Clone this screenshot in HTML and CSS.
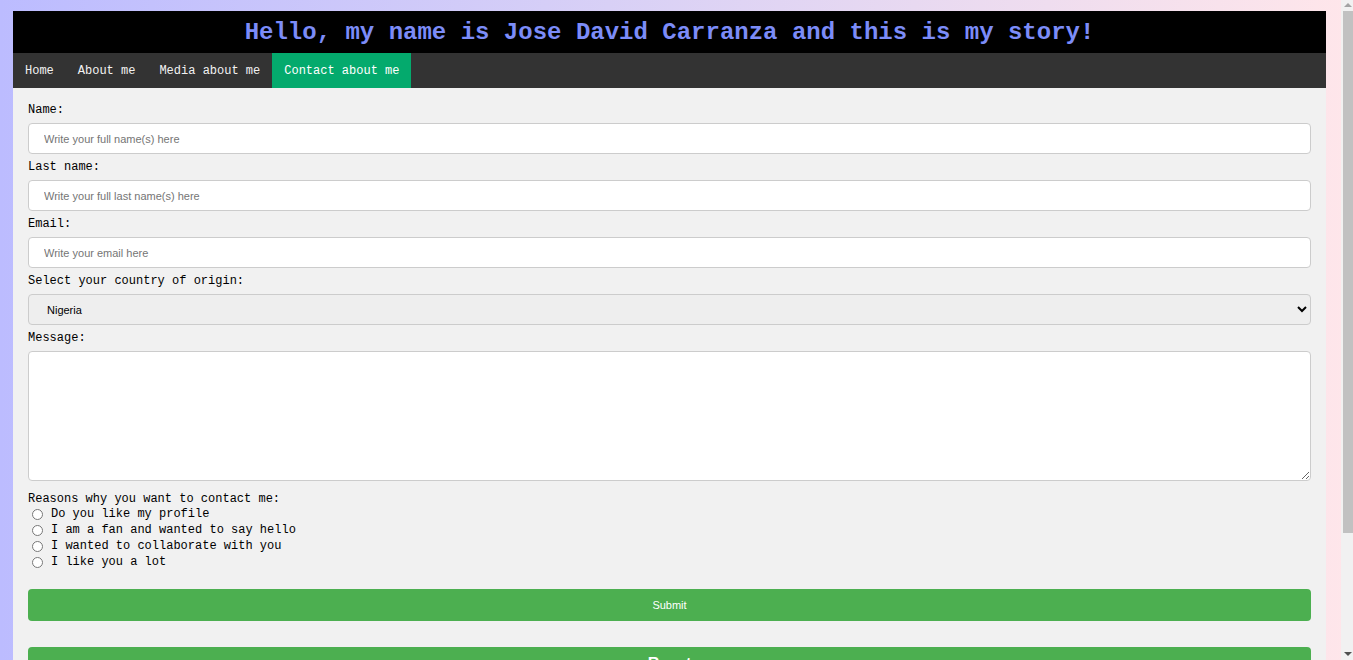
FILE: index.html
```html
<!DOCTYPE html>
<html lang="en">
<head>
<meta charset="utf-8">
<title>Contact about me</title>
<link rel="stylesheet" href="styles.css">
</head>
<body>
<div class="page">
  <header class="header">
    <h1 class="title">Hello, my name is Jose David Carranza and this is my story!</h1>
  </header>
  <nav class="nav">
    <a class="nav-link" href="#">Home</a>
    <a class="nav-link" href="#">About me</a>
    <a class="nav-link" href="#">Media about me</a>
    <a class="nav-link active" href="#">Contact about me</a>
  </nav>
  <main class="content">
    <form class="form">
      <label class="field-label" for="fname">Name:</label>
      <input class="field" id="fname" type="text" placeholder="Write your full name(s) here">
      <label class="field-label" for="lname">Last name:</label>
      <input class="field" id="lname" type="text" placeholder="Write your full last name(s) here">
      <label class="field-label" for="email">Email:</label>
      <input class="field" id="email" type="text" placeholder="Write your email here">
      <label class="field-label" for="country">Select your country of origin:</label>
      <select class="field select" id="country">
        <option>Nigeria</option>
        <option>Mexico</option>
        <option>USA</option>
      </select>
      <label class="field-label" for="msg">Message:</label>
      <textarea class="field textarea" id="msg"></textarea>
      <div class="reasons">
        <div class="reasons-title">Reasons why you want to contact me:</div>
        <label class="radio-row"><input class="radio" type="radio" name="r">Do you like my profile</label>
        <label class="radio-row"><input class="radio" type="radio" name="r">I am a fan and wanted to say hello</label>
        <label class="radio-row"><input class="radio" type="radio" name="r">I wanted to collaborate with you</label>
        <label class="radio-row"><input class="radio" type="radio" name="r">I like you a lot</label>
      </div>
      <button class="btn" type="submit">Submit</button>
      <button class="btn btn-big" type="reset">Reset</button>
    </form>
  </main>
</div>
<div class="scrollbar" aria-hidden="true">
  <div class="sb-up"></div>
  <div class="sb-thumb"></div>
  <div class="sb-down"></div>
</div>
</body>
</html>
```
FILE: styles.css
```css
html, body {
  margin: 0;
  padding: 0;
}
html {
  scrollbar-width: none;
}
html::-webkit-scrollbar {
  display: none;
}
body {
  background: linear-gradient(to right, #bcbcff 0%, #d8d0f6 45%, #ffe6ea 100%);
  min-height: 100vh;
  font-family: "Liberation Mono", "Courier New", monospace;
}
.page {
  margin: 11px 27px 0 13px;
  padding-bottom: 40px;
}
.header {
  background: #000;
  height: 42px;
  display: flex;
  align-items: center;
  justify-content: center;
}
.title {
  margin: 0;
  padding-top: 1px;
  font-family: "Liberation Mono", "Courier New", monospace;
  font-size: 24px;
  font-weight: bold;
  color: #7c8cf8;
  line-height: 1;
}
.nav {
  background: #333;
  height: 35px;
  display: flex;
}
.nav-link {
  display: block;
  padding: 1px 12px 0;
  line-height: 34px;
  font-size: 12px;
  color: #f2f2f2;
  text-decoration: none;
}
.nav-link.active {
  background: #04aa6d;
  color: #fff;
}
.content {
  background: #f1f1f1;
  padding: 15px 15px 100px;
}
.form {
  display: flex;
  flex-direction: column;
}
.field-label {
  display: block;
  font-size: 12px;
  line-height: 14px;
  color: #000;
}
.field {
  display: block;
  box-sizing: border-box;
  width: 100%;
  height: 31px;
  margin: 6px 0;
  padding: 0 15px;
  border: 1px solid #ccc;
  border-radius: 4px;
  background: #fff;
  font-family: "Liberation Sans", Arial, sans-serif;
  font-size: 11px;
  color: #000;
}
.field::placeholder {
  color: #757575;
}
.select {
  background-color: #eeeeee;
  padding: 0 14px;
  color: #000;
}
.textarea {
  height: 130px;
  margin-bottom: 11px;
  padding: 8px 15px;
  resize: vertical;
}
.reasons {
  display: flex;
  flex-direction: column;
  font-size: 12px;
  color: #000;
}
.reasons-title {
  line-height: 14px;
}
.radio-row {
  display: flex;
  align-items: center;
  height: 16px;
}
.radio {
  margin: 0 8px 0 4px;
  width: 11px;
  height: 11px;
}
.btn {
  display: block;
  width: 100%;
  height: 32px;
  margin-top: 19px;
  border: none;
  border-radius: 4px;
  background: #4caf50;
  color: #fff;
  font-family: "Liberation Sans", Arial, sans-serif;
  font-size: 11px;
  cursor: pointer;
}
.btn-big {
  margin-top: 26px;
  height: 34px;
  font-size: 16px;
  font-weight: bold;
}
.scrollbar {
  position: fixed;
  top: 0;
  right: 0;
  width: 12px;
  height: 100vh;
  background: #f1f1f1;
}
.sb-up {
  position: absolute;
  top: 3px;
  left: 3px;
  width: 0;
  height: 0;
  border-left: 4px solid transparent;
  border-right: 4px solid transparent;
  border-bottom: 4px solid #a3a3a3;
}
.sb-thumb {
  position: absolute;
  top: 11px;
  left: 2px;
  right: 0;
  height: 522px;
  background: #c1c1c1;
}
.sb-down {
  position: absolute;
  bottom: 4px;
  left: 3px;
  width: 0;
  height: 0;
  border-left: 4px solid transparent;
  border-right: 4px solid transparent;
  border-top: 4px solid #505050;
}
```
